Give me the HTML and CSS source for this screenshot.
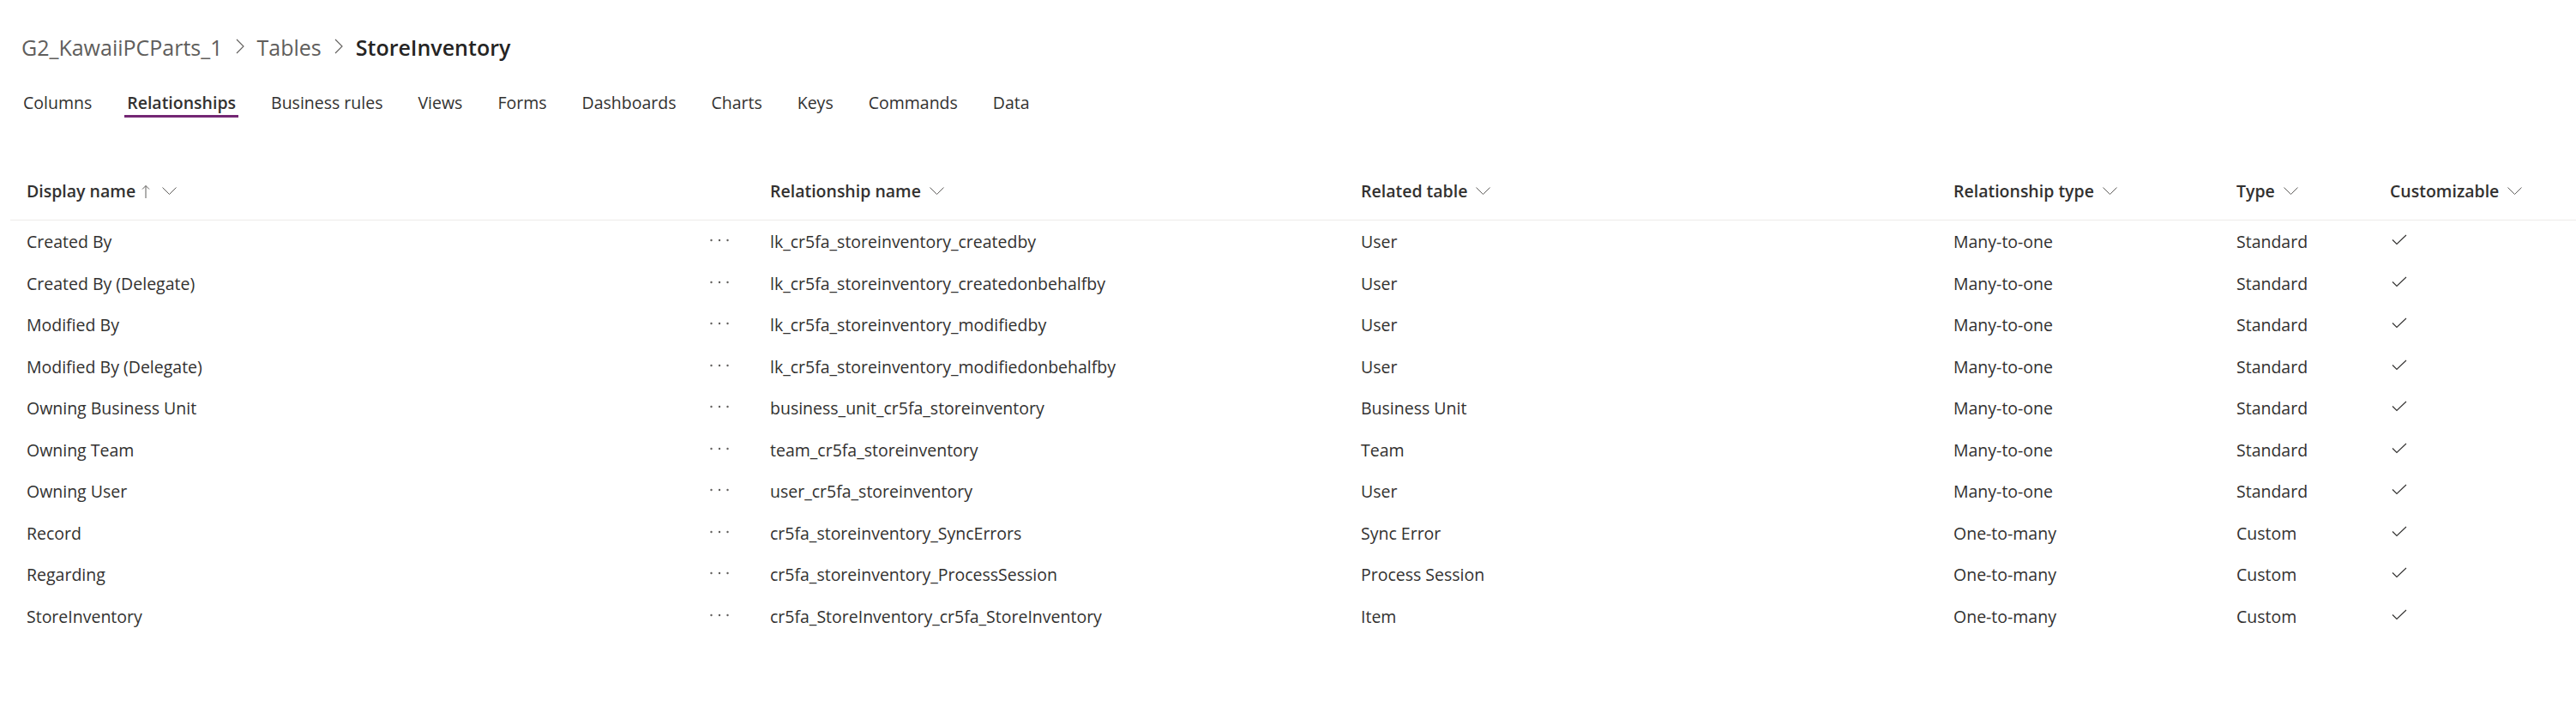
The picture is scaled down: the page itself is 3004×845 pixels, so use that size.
FILE: index.html
```html
<!DOCTYPE html>
<html lang="en">
<head>
<meta charset="utf-8">
<title>StoreInventory - Relationships</title>
<link rel="stylesheet" href="styles.css">
</head>
<body>
<div class="page">
  <nav class="breadcrumb">
    <span class="crumb">G2_KawaiiPCParts_1</span>
    <svg class="crumb-sep" width="10" height="18" viewBox="0 0 10 18"><polyline points="1,1 9,9 1,17" fill="none" stroke="#605e5c" stroke-width="1.1"/></svg>
    <span class="crumb">Tables</span>
    <svg class="crumb-sep" width="10" height="18" viewBox="0 0 10 18"><polyline points="1,1 9,9 1,17" fill="none" stroke="#605e5c" stroke-width="1.1"/></svg>
    <span class="crumb current">StoreInventory</span>
  </nav>

  <div class="tabs">
    <span class="tab">Columns</span>
    <span class="tab active">Relationships</span>
    <span class="tab">Business rules</span>
    <span class="tab">Views</span>
    <span class="tab">Forms</span>
    <span class="tab">Dashboards</span>
    <span class="tab">Charts</span>
    <span class="tab">Keys</span>
    <span class="tab">Commands</span>
    <span class="tab">Data</span>
  </div>

  <div class="grid">
    <div class="row header">
      <div class="hcell">Display name
        <svg class="sort-up" width="10" height="16" viewBox="0 0 10 16"><path d="M5 1.5V16M1 5.5L5 1.5L9 5.5" fill="none" stroke="#605e5c" stroke-width="1"/></svg>
        <svg class="chev" width="17" height="9" viewBox="0 0 17 9"><path d="M0.5 0.5L8.5 8.5L16.5 0.5" fill="none" stroke="#605e5c" stroke-width="1"/></svg>
      </div>
      <div></div>
      <div class="hcell">Relationship name
        <svg class="chev" width="17" height="9" viewBox="0 0 17 9"><path d="M0.5 0.5L8.5 8.5L16.5 0.5" fill="none" stroke="#605e5c" stroke-width="1"/></svg>
      </div>
      <div class="hcell">Related table
        <svg class="chev" width="17" height="9" viewBox="0 0 17 9"><path d="M0.5 0.5L8.5 8.5L16.5 0.5" fill="none" stroke="#605e5c" stroke-width="1"/></svg>
      </div>
      <div class="hcell">Relationship type
        <svg class="chev" width="17" height="9" viewBox="0 0 17 9"><path d="M0.5 0.5L8.5 8.5L16.5 0.5" fill="none" stroke="#605e5c" stroke-width="1"/></svg>
      </div>
      <div class="hcell">Type
        <svg class="chev" width="17" height="9" viewBox="0 0 17 9"><path d="M0.5 0.5L8.5 8.5L16.5 0.5" fill="none" stroke="#605e5c" stroke-width="1"/></svg>
      </div>
      <div class="hcell">Customizable
        <svg class="chev" width="17" height="9" viewBox="0 0 17 9"><path d="M0.5 0.5L8.5 8.5L16.5 0.5" fill="none" stroke="#605e5c" stroke-width="1"/></svg>
      </div>
    </div>

    <div class="rows" id="rows"></div>
  </div>
</div>
<script src="app.js"></script>
</body>
</html>
```

FILE: app.js
```js
const data = [
  ["Created By", "lk_cr5fa_storeinventory_createdby", "User", "Many-to-one", "Standard"],
  ["Created By (Delegate)", "lk_cr5fa_storeinventory_createdonbehalfby", "User", "Many-to-one", "Standard"],
  ["Modified By", "lk_cr5fa_storeinventory_modifiedby", "User", "Many-to-one", "Standard"],
  ["Modified By (Delegate)", "lk_cr5fa_storeinventory_modifiedonbehalfby", "User", "Many-to-one", "Standard"],
  ["Owning Business Unit", "business_unit_cr5fa_storeinventory", "Business Unit", "Many-to-one", "Standard"],
  ["Owning Team", "team_cr5fa_storeinventory", "Team", "Many-to-one", "Standard"],
  ["Owning User", "user_cr5fa_storeinventory", "User", "Many-to-one", "Standard"],
  ["Record", "cr5fa_storeinventory_SyncErrors", "Sync Error", "One-to-many", "Custom"],
  ["Regarding", "cr5fa_storeinventory_ProcessSession", "Process Session", "One-to-many", "Custom"],
  ["StoreInventory", "cr5fa_StoreInventory_cr5fa_StoreInventory", "Item", "One-to-many", "Custom"]
];
const more = '<svg width="22" height="4" viewBox="0 0 22 4"><circle cx="1.5" cy="2" r="1.2" fill="#605e5c"/><circle cx="11" cy="2" r="1.2" fill="#605e5c"/><circle cx="20.5" cy="2" r="1.2" fill="#605e5c"/></svg>';
const check = '<svg width="18" height="13" viewBox="0 0 18 13"><polyline points="1,6.5 6,11.5 17,1" fill="none" stroke="#323130" stroke-width="1.1"/></svg>';
const rows = document.getElementById("rows");
data.forEach(r => {
  const row = document.createElement("div");
  row.className = "row item";
  row.innerHTML =
    '<div class="cell">' + r[0] + '</div>' +
    '<div class="cell more">' + more + '</div>' +
    '<div class="cell">' + r[1] + '</div>' +
    '<div class="cell">' + r[2] + '</div>' +
    '<div class="cell">' + r[3] + '</div>' +
    '<div class="cell">' + r[4] + '</div>' +
    '<div class="cell check">' + check + '</div>';
  rows.appendChild(row);
});
```

FILE: styles.css
```css
html, body {
  margin: 0;
  padding: 0;
  background: #ffffff;
}

body {
  font-family: "Open Sans", "Noto Sans", sans-serif;
  color: #323130;
}

.page {
  padding-top: 39px;
}

.breadcrumb {
  display: flex;
  align-items: center;
  gap: 15px;
  padding-left: 25px;
  height: 32px;
  font-size: 25px;
  line-height: 32px;
  color: #605e5c;
}

.crumb-sep {
  margin-bottom: 3px;
}

.crumb.current {
  color: #252423;
  font-weight: 600;
}

.tabs {
  display: flex;
  gap: 35px;
  margin-top: 35px;
  padding-left: 24px;
  font-size: 19.5px;
  line-height: 28px;
}

.tab {
  padding: 0 3px;
  border-bottom: 3px solid transparent;
  color: #323130;
}

.tab.active {
  font-weight: 600;
  border-bottom-color: #742774;
}

.grid {
  margin-top: 70px;
}

.row {
  display: grid;
  grid-template-columns: 797px 70px 689px 691px 330px 179px 1fr;
  margin-left: 12px;
  padding-left: 19px;
}

.header {
  font-size: 19.5px;
  font-weight: 600;
  line-height: 32px;
  padding-bottom: 17px;
  border-bottom: 1px solid #edebe9;
}

.hcell {
  display: flex;
  align-items: center;
  gap: 10px;
  white-space: nowrap;
}

.sort-up {
  margin-left: -3px;
}

.sort-up + .chev {
  margin-left: 4px;
}

.chev {
  margin-top: -2px;
}

.rows {
  padding-top: 1px;
}

.item {
  height: 48.5px;
  align-items: center;
  font-size: 19.5px;
  line-height: 28px;
}

.cell {
  white-space: nowrap;
}

.cell.more {
  display: flex;
  align-items: center;
  height: 28px;
  margin-top: -4px;
}

.cell.check {
  display: flex;
  align-items: center;
  margin-top: -5px;
  padding-left: 2px;
}
```
